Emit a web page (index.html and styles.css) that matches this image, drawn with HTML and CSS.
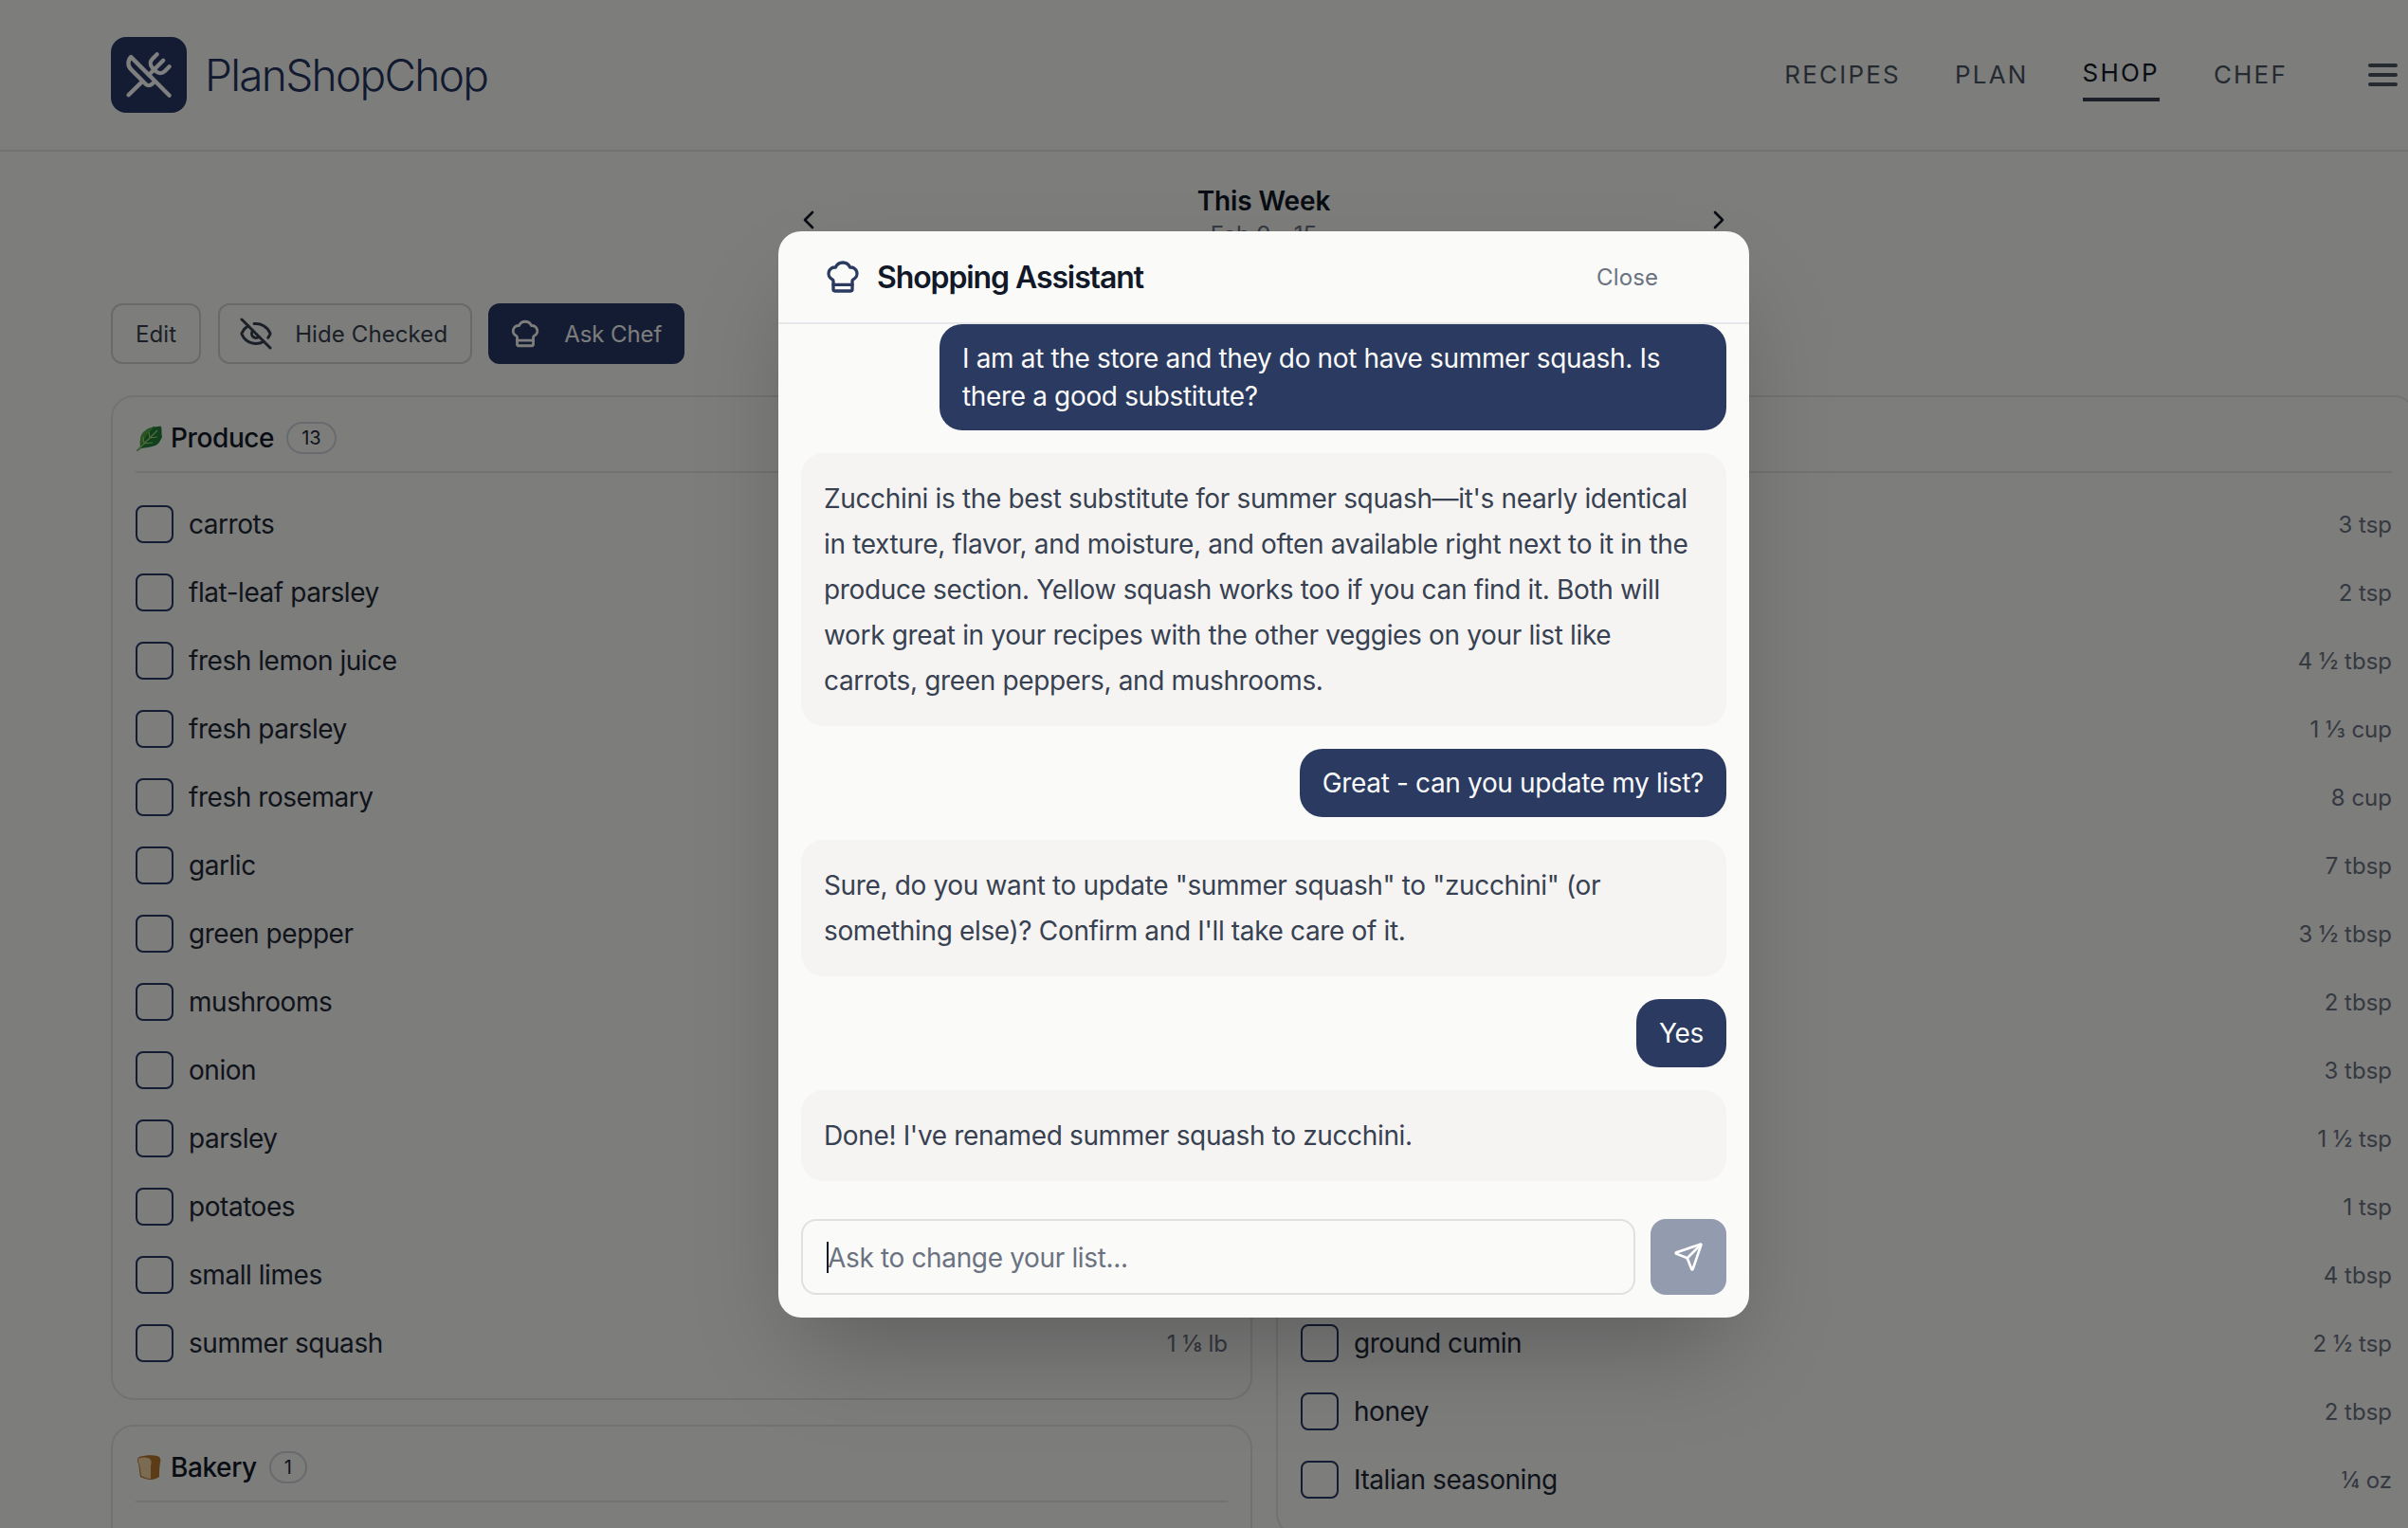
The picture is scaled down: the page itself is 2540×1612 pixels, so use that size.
FILE: index.html
```html
<!DOCTYPE html>
<html lang="en">
<head>
  <meta charset="UTF-8">
  <meta name="viewport" content="width=device-width, initial-scale=1.0">
  <title>PlanShopChop - Shop</title>
  <link rel="stylesheet" href="styles.css">
</head>
<body>
  <div class="page">
    <header class="site-header">
      <a class="brand">
        <span class="brand-mark">
          <svg class="icon" viewBox="0 0 24 24"><path d="m16 2-2.3 2.3a3 3 0 0 0 0 4.2l1.8 1.8a3 3 0 0 0 4.2 0L22 8"/><path d="M15 15 3.3 3.3a4.2 4.2 0 0 0 0 6l7.3 7.3c.7.7 2 .7 2.8 0L15 15Zm0 0 7 7"/><path d="m2.1 21.8 6.4-6.3"/><path d="m19 5-7 7"/></svg>
        </span>
        <span class="brand-name">PlanShopChop</span>
      </a>
      <nav class="main-nav">
        <a class="nav-link">RECIPES</a>
        <a class="nav-link">PLAN</a>
        <a class="nav-link active">SHOP</a>
        <a class="nav-link">CHEF</a>
      </nav>
      <div class="hamburger"><span></span><span></span><span></span></div>
    </header>

    <main class="content">
      <div class="week-nav">
        <svg class="icon chevron" viewBox="0 0 24 24"><path d="m15 18-6-6 6-6"/></svg>
        <div class="week-label">
          <div class="week-title">This Week</div>
          <div class="week-dates">Feb 9 - 15</div>
        </div>
        <svg class="icon chevron" viewBox="0 0 24 24"><path d="m9 18 6-6-6-6"/></svg>
      </div>

      <div class="toolbar">
        <button class="btn">Edit</button>
        <button class="btn">
          <svg class="icon icon-eye" viewBox="0 0 24 24"><path d="M10.733 5.076a10.744 10.744 0 0 1 11.205 6.575 1 1 0 0 1 0 .696 10.747 10.747 0 0 1-1.444 2.49"/><path d="M14.084 14.158a3 3 0 0 1-4.242-4.242"/><path d="M17.479 17.499a10.75 10.75 0 0 1-15.417-5.151 1 1 0 0 1 0-.696 10.75 10.75 0 0 1 4.446-5.143"/><path d="m2 2 20 20"/></svg>
          Hide Checked
        </button>
        <button class="btn btn-primary">
          <svg class="icon icon-hat" viewBox="0 0 24 24"><path d="M17 21a1 1 0 0 0 1-1v-5.35c0-.457.316-.844.727-1.041a4 4 0 0 0-2.134-7.589 5 5 0 0 0-9.186 0 4 4 0 0 0-2.134 7.588c.411.198.727.585.727 1.041V20a1 1 0 0 0 1 1Z"/><path d="M6 17h12"/></svg>
          Ask Chef
        </button>
      </div>

      <div class="columns">
        <div class="column">
          <section class="card">
            <div class="card-head">
              <svg class="emoji" viewBox="0 0 28 28">
                <path class="leaf-dark" d="M1 27l4-4C4 15 6 8 11 6c2-3 6-2 8-4 3 1 6-1 8 0 1 4 0 8 1 11-2 4-3 7-7 9-6 2-11 2-15 3l-4 3Z"/>
                <path class="leaf-light" d="M5 23C4 15 6 8 11 6c2-3 6-2 8-4-2 4-6 7-8 10-2 4-4 8-6 11Z"/>
                <path class="leaf-rib" d="M2 27 23 6M9 20l-1-7M9 20l9-1M15 14l-1-6M15 14l8-1"/>
              </svg>
              <h2 class="card-title">Produce</h2>
              <span class="badge">13</span>
            </div>
            <ul class="items">
              <li class="item"><span class="box"></span><span class="item-name">carrots</span></li>
              <li class="item"><span class="box"></span><span class="item-name">flat-leaf parsley</span></li>
              <li class="item"><span class="box"></span><span class="item-name">fresh lemon juice</span></li>
              <li class="item"><span class="box"></span><span class="item-name">fresh parsley</span></li>
              <li class="item"><span class="box"></span><span class="item-name">fresh rosemary</span></li>
              <li class="item"><span class="box"></span><span class="item-name">garlic</span></li>
              <li class="item"><span class="box"></span><span class="item-name">green pepper</span></li>
              <li class="item"><span class="box"></span><span class="item-name">mushrooms</span></li>
              <li class="item"><span class="box"></span><span class="item-name">onion</span></li>
              <li class="item"><span class="box"></span><span class="item-name">parsley</span></li>
              <li class="item"><span class="box"></span><span class="item-name">potatoes</span></li>
              <li class="item"><span class="box"></span><span class="item-name">small limes</span></li>
              <li class="item"><span class="box"></span><span class="item-name">summer squash</span><span class="item-qty">1 ⅛ lb</span></li>
            </ul>
          </section>
          <section class="card card-open">
            <div class="card-head">
              <svg class="emoji" viewBox="0 0 28 28">
                <path class="bread-crust" d="M4 3c6-2 14-2 19-1 3 1 4 4 3 7-1 5-1 10-1 15-3 2-6 3-9 3-4 0-8-2-11-3-1-5-1-10-2-14C1 7 2 4 4 3Z"/>
                <path class="bread-face" d="M3 5c3-2 9-2 12 0 2 2 2 5 1 7v14c-4 0-7-2-10-3-1-5-1-9-2-12-1-2-2-5-1-6Z"/>
              </svg>
              <h2 class="card-title">Bakery</h2>
              <span class="badge">1</span>
            </div>
          </section>
        </div>

        <div class="column">
          <section class="card card-open">
            <div class="card-head card-head-empty"></div>
            <ul class="items">
              <li class="item"><span class="box"></span><span class="item-name"></span><span class="item-qty">3 tsp</span></li>
              <li class="item"><span class="box"></span><span class="item-name"></span><span class="item-qty">2 tsp</span></li>
              <li class="item"><span class="box"></span><span class="item-name"></span><span class="item-qty">4 ½ tbsp</span></li>
              <li class="item"><span class="box"></span><span class="item-name"></span><span class="item-qty">1 ⅓ cup</span></li>
              <li class="item"><span class="box"></span><span class="item-name"></span><span class="item-qty">8 cup</span></li>
              <li class="item"><span class="box"></span><span class="item-name"></span><span class="item-qty">7 tbsp</span></li>
              <li class="item"><span class="box"></span><span class="item-name"></span><span class="item-qty">3 ½ tbsp</span></li>
              <li class="item"><span class="box"></span><span class="item-name"></span><span class="item-qty">2 tbsp</span></li>
              <li class="item"><span class="box"></span><span class="item-name"></span><span class="item-qty">3 tbsp</span></li>
              <li class="item"><span class="box"></span><span class="item-name"></span><span class="item-qty">1 ½ tsp</span></li>
              <li class="item"><span class="box"></span><span class="item-name"></span><span class="item-qty">1 tsp</span></li>
              <li class="item"><span class="box"></span><span class="item-name"></span><span class="item-qty">4 tbsp</span></li>
              <li class="item"><span class="box"></span><span class="item-name">ground cumin</span><span class="item-qty">2 ½ tsp</span></li>
              <li class="item"><span class="box"></span><span class="item-name">honey</span><span class="item-qty">2 tbsp</span></li>
              <li class="item"><span class="box"></span><span class="item-name">Italian seasoning</span><span class="item-qty">¼ oz</span></li>
            </ul>
          </section>
        </div>
      </div>
    </main>

    <div class="overlay">
      <div class="modal">
        <div class="modal-head">
          <svg class="icon modal-hat" viewBox="0 0 24 24"><path d="M17 21a1 1 0 0 0 1-1v-5.35c0-.457.316-.844.727-1.041a4 4 0 0 0-2.134-7.589 5 5 0 0 0-9.186 0 4 4 0 0 0-2.134 7.588c.411.198.727.585.727 1.041V20a1 1 0 0 0 1 1Z"/><path d="M6 17h12"/></svg>
          <h3 class="modal-title">Shopping Assistant</h3>
          <button class="modal-close">Close</button>
        </div>
        <div class="messages">
          <div class="msg msg-user">I am at the store and they do not have summer squash. Is there a good substitute?</div>
          <div class="msg msg-bot">Zucchini is the best substitute for summer squash—it's nearly identical in texture, flavor, and moisture, and often available right next to it in the produce section. Yellow squash works too if you can find it. Both will work great in your recipes with the other veggies on your list like carrots, green peppers, and mushrooms.</div>
          <div class="msg msg-user">Great - can you update my list?</div>
          <div class="msg msg-bot">Sure, do you want to update "summer squash" to "zucchini" (or something else)? Confirm and I'll take care of it.</div>
          <div class="msg msg-user">Yes</div>
          <div class="msg msg-bot">Done! I've renamed summer squash to zucchini.</div>
        </div>
        <form class="composer">
          <div class="composer-field">
            <input class="composer-input" type="text" placeholder="Ask to change your list...">
          </div>
          <button class="send-btn" type="button">
            <svg class="icon" viewBox="0 0 24 24"><path d="M14.536 21.686a.5.5 0 0 0 .937-.024l6.5-19a.496.496 0 0 0-.635-.635l-19 6.5a.5.5 0 0 0-.024.937l7.93 3.18a2 2 0 0 1 1.112 1.11z"/><path d="m21.854 2.147-10.94 10.939"/></svg>
          </button>
        </form>
      </div>
    </div>
  </div>
</body>
</html>
```

FILE: styles.css
```css
* {
  box-sizing: border-box;
}

html, body {
  margin: 0;
  height: 100%;
  overflow: hidden;
}

body {
  font-family: Inter, 'Noto Sans', sans-serif;
  background-color: #fafaf9;
  color: #111827;
}

.page {
  position: relative;
  width: 2666px;
  height: 1612px;
  overflow: hidden;
}

.icon {
  fill: none;
  stroke: currentColor;
  stroke-width: 2;
  stroke-linecap: round;
  stroke-linejoin: round;
  flex-shrink: 0;
}

/* header */
.site-header {
  display: flex;
  align-items: center;
  height: 160px;
  padding: 0 137px 0 117px;
  border-bottom: 2px solid #e7e5e4;
}

.brand {
  display: flex;
  align-items: center;
  gap: 19px;
  margin-right: auto;
}

.brand-mark {
  display: flex;
  align-items: center;
  justify-content: center;
  width: 80px;
  height: 80px;
  border-radius: 16px;
  background-color: #263966;
  color: white;
}

.brand-mark .icon {
  width: 52px;
  height: 52px;
}

.brand-name {
  font-size: 46px;
  font-weight: 300;
  letter-spacing: -1.7px;
  color: #243560;
}

.main-nav {
  display: flex;
  align-items: center;
  gap: 57px;
  margin-right: 85px;
}

.nav-link {
  font-size: 26px;
  line-height: 32px;
  letter-spacing: 2.2px;
  color: #4b5563;
}

.nav-link.active {
  padding-bottom: 10px;
  margin-bottom: -10px;
  color: #111827;
  border-bottom: 4px solid #374151;
}

.hamburger {
  display: flex;
  flex-direction: column;
  gap: 6px;
  width: 31px;
}

.hamburger span {
  height: 4px;
  border-radius: 2px;
  background-color: #4b5563;
}

/* main area */
.content {
  padding: 32px 117px 0;
}

.week-nav {
  display: flex;
  align-items: center;
  justify-content: space-between;
  width: 992px;
  margin: 0 auto;
}

.chevron {
  width: 32px;
  height: 32px;
  margin-top: 8px;
}

.week-label {
  text-align: center;
}

.week-title {
  font-size: 28px;
  font-weight: 600;
  line-height: 40px;
  letter-spacing: -0.1px;
}

.week-dates {
  font-size: 24px;
  line-height: 32px;
  color: #6b7280;
}

.toolbar {
  display: flex;
  gap: 18px;
  margin-top: 56px;
}

.btn {
  display: flex;
  align-items: center;
  height: 64px;
  padding: 0 24px;
  gap: 24px;
  font-family: inherit;
  font-size: 24px;
  letter-spacing: 0.1px;
  color: #374151;
  background: transparent;
  border: 2px solid #d6d3d1;
  border-radius: 12px;
}

.btn-primary {
  margin-left: -1px;
  padding-right: 22px;
  letter-spacing: -0.1px;
  color: #fafaf9;
  background-color: #263966;
  border-color: #263966;
}

.icon-eye {
  width: 36px;
  height: 36px;
  margin-left: -4px;
  margin-right: -1px;
}

.icon-hat {
  width: 34px;
  height: 34px;
  margin-left: -4px;
}

.columns {
  display: grid;
  grid-template-columns: 1204px 1203px;
  gap: 25px;
  margin-top: 33px;
}

.column {
  display: flex;
  flex-direction: column;
  gap: 26px;
}

.card {
  padding: 0 24px 22px;
  border: 2px solid #e7e5e4;
  border-radius: 24px;
}

.card-open {
  min-height: 400px;
}

.card-head {
  display: flex;
  align-items: center;
  height: 80px;
  padding-top: 8px;
  border-bottom: 2px solid #e7e5e4;
}

.card-head-empty {
  height: 80px;
}

.emoji {
  width: 28px;
  height: 28px;
  margin-right: 9px;
}

.leaf-dark {
  fill: #23803a;
}

.leaf-light {
  fill: #54ab44;
}

.leaf-rib {
  fill: none;
  stroke: #a6d877;
  stroke-width: 1.2;
}

.bread-crust {
  fill: #b9772f;
}

.bread-face {
  fill: #f6d7a4;
}

.card-title {
  margin: 0;
  font-size: 28px;
  font-weight: 500;
  letter-spacing: -0.4px;
  color: #111827;
}

.badge {
  display: flex;
  align-items: center;
  justify-content: center;
  min-width: 37px;
  height: 34px;
  margin-left: 13px;
  padding: 0 14px;
  font-size: 20px;
  color: #1f2937;
  border: 2px solid #d1d5db;
  border-radius: 17px;
}

.items {
  list-style: none;
  margin: 0;
  padding: 18px 0 0;
}

.item {
  display: flex;
  align-items: center;
  height: 72px;
}

.box {
  width: 40px;
  height: 40px;
  margin-right: 16px;
  border: 2px solid #263966;
  border-radius: 8px;
}

.item-name {
  font-size: 28px;
  letter-spacing: -0.45px;
  color: #1f2937;
}

.item-qty {
  margin-left: auto;
  font-size: 24px;
  color: #6b7280;
}

/* chat dialog */
.overlay {
  position: absolute;
  inset: 0;
  display: flex;
  justify-content: center;
  align-items: flex-start;
  padding-top: 244px;
  background-color: rgba(0, 0, 0, 0.5);
}

.modal {
  width: 1024px;
  height: 1146px;
  display: flex;
  flex-direction: column;
  background-color: #fafaf9;
  border-radius: 24px;
  box-shadow: 0 50px 100px -24px rgba(0, 0, 0, 0.25);
  overflow: hidden;
}

.modal-head {
  display: flex;
  align-items: center;
  height: 98px;
  flex-shrink: 0;
  padding: 0 50px 0 48px;
  border-bottom: 2px solid #e5e7eb;
}

.modal-hat {
  width: 40px;
  height: 40px;
  margin-right: 16px;
  color: #2a3a61;
}

.modal-title {
  margin: 0 auto 0 0;
  font-size: 32px;
  font-weight: 600;
  letter-spacing: -1.1px;
  color: #111827;
}

.modal-close {
  padding: 0 46px 0 0;
  font-family: inherit;
  font-size: 24px;
  letter-spacing: 0.1px;
  color: #6b7280;
  background: none;
  border: none;
}

.messages {
  flex: 1;
  display: flex;
  flex-direction: column;
  align-items: flex-end;
  gap: 24px;
  padding: 0 24px;
}

.msg {
  font-size: 28px;
  letter-spacing: -0.35px;
}

.msg-user {
  max-width: 830px;
  padding: 16px 24px;
  line-height: 40px;
  color: #fafaf9;
  background-color: #2a3a61;
  border-radius: 24px;
}

.msg-bot {
  width: 100%;
  padding: 24px;
  line-height: 48px;
  color: #374151;
  background-color: #f5f4f2;
  border-radius: 24px;
}

.composer {
  display: flex;
  gap: 16px;
  padding: 0 24px 24px;
}

.composer-field {
  position: relative;
  flex: 1;
}

/* text caret of the focused input */
.composer-field::before {
  content: '';
  position: absolute;
  left: 27px;
  top: 24px;
  width: 2px;
  height: 33px;
  background-color: #111827;
}

.composer-input {
  width: 100%;
  height: 80px;
  padding: 2px 26px 0;
  font-family: inherit;
  font-size: 28px;
  letter-spacing: -0.35px;
  background: transparent;
  border: 2px solid #e2e0dd;
  border-radius: 16px;
  outline: none;
}

.composer-input::placeholder {
  color: #6b7280;
}

.send-btn {
  display: flex;
  align-items: center;
  justify-content: center;
  width: 80px;
  height: 80px;
  padding: 0;
  color: white;
  background-color: #939bae;
  border: none;
  border-radius: 16px;
}

.send-btn .icon {
  width: 32px;
  height: 32px;
}
```
